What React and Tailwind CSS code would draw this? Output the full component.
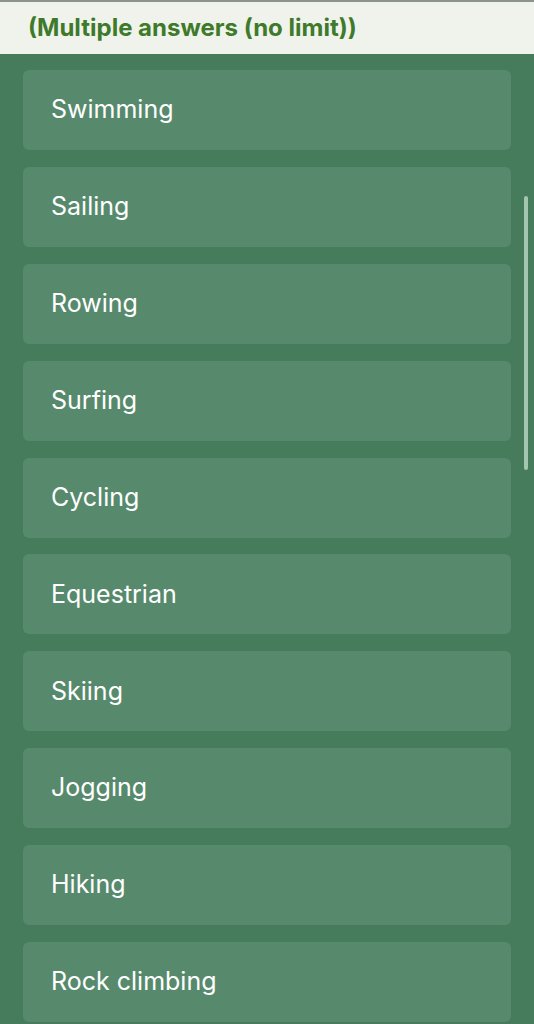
import React from "react";

const options = [
  "Swimming",
  "Sailing",
  "Rowing",
  "Surfing",
  "Cycling",
  "Equestrian",
  "Skiing",
  "Jogging",
  "Hiking",
  "Rock climbing",
];

export default function App() {
  return (
    <div
      className="relative w-[534px] h-[1024px] overflow-hidden bg-[#467c5b]"
      style={{ fontFamily: "Inter, 'Noto Sans', sans-serif" }}
    >
      <div className="h-[54px] bg-[#eff3ec] border-t-2 border-[#8c948c] flex items-center px-[28px]">
        <h1 className="text-[24px] font-bold text-[#3e7a2a]">
          (Multiple answers (no limit))
        </h1>
      </div>
      <div className="flex flex-col gap-[16.9px] pt-[16px] pl-[23px] pr-[23px]">
        {options.map((opt) => (
          <div
            key={opt}
            className="h-[80px] rounded-[6px] bg-[#578a6c] flex items-center pl-[28px]"
          >
            <span className="text-[25px] text-white">{opt}</span>
          </div>
        ))}
      </div>
      {/* scrollbar */}
      <div className="absolute right-[6px] top-[196px] w-[4px] h-[274px] rounded-full bg-[#a3c6b0]" />
    </div>
  );
}
